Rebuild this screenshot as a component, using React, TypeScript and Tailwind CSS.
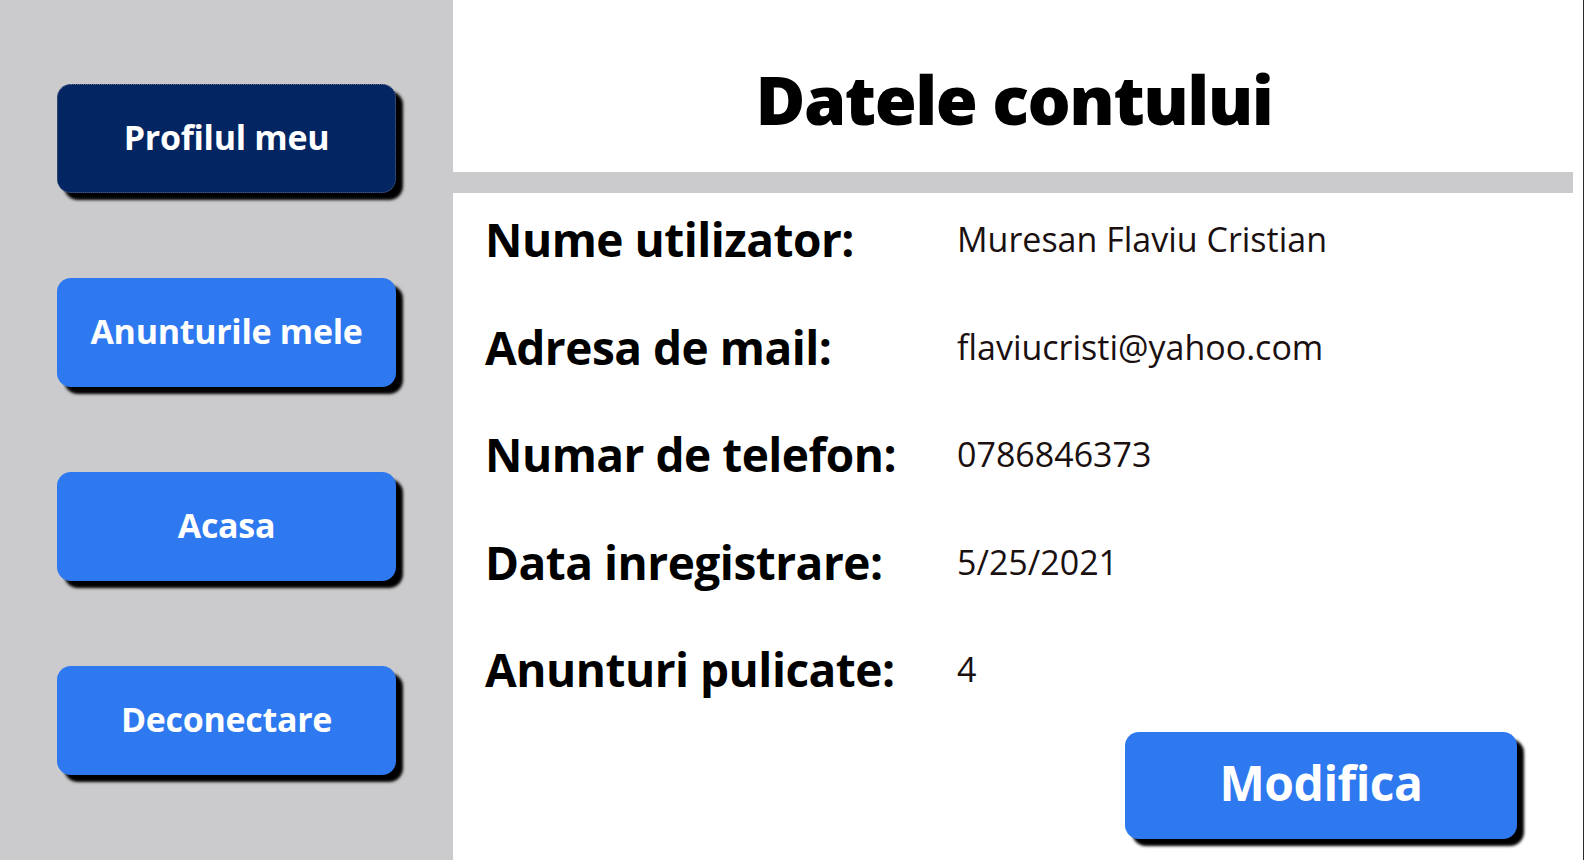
import React from "react";

const font = { fontFamily: '"Open Sans", "Noto Sans", sans-serif' };

function SideButton({ label, active }: { label: string; active?: boolean }) {
  return (
    <button
      className={
        "w-[339px] h-[109px] pb-[3px] rounded-[14px] shadow-[7px_7px_3px_#000] text-white font-bold text-[34px] tracking-[-0.3px] flex items-center justify-center " +
        (active ? "bg-[#032561] border border-dotted border-[#5a6a8a]" : "bg-[#2e79ef]")
      }
    >
      {label}
    </button>
  );
}

const rows: [string, string][] = [
  ["Nume utilizator:", "Muresan Flaviu Cristian"],
  ["Adresa de mail:", "flaviucristi@yahoo.com"],
  ["Numar de telefon:", "0786846373"],
  ["Data inregistrare:", "5/25/2021"],
  ["Anunturi pulicate:", "4"],
];

export default function App() {
  return (
    <div className="w-[1586px] h-[860px] flex bg-white overflow-hidden" style={font}>
      <aside className="w-[453px] h-full bg-[#cbcbcd] flex flex-col items-center pt-[84px] gap-[85px]">
        <SideButton label="Profilul meu" active />
        <SideButton label="Anunturile mele" />
        <SideButton label="Acasa" />
        <SideButton label="Deconectare" />
      </aside>
      <main className="w-[1131px] h-full flex flex-col border-r border-[#2b2b2b]">
        <div className="h-[172px] pt-[26px] flex items-center justify-center">
          <h1 className="text-[68px] font-extrabold text-black tracking-[-1.5px] pr-[8px]">Datele contului</h1>
        </div>
        <div className="h-[21px] bg-[#cbcbcd] mr-[10px]" />
        <div className="flex flex-col pl-[32px] mt-[-7px]">
          {rows.map(([k, v]) => (
            <div key={k} className="h-[107.5px] flex items-center">
              <div className="w-[472px] text-[46px] font-bold text-black tracking-[-0.5px]">{k}</div>
              <div className="text-[34px] text-[#1a1010]">{v}</div>
            </div>
          ))}
        </div>
        <div className="flex justify-end pr-[66px] mt-auto mb-[21px]">
          <button className="w-[392px] h-[107px] pb-[6px] rounded-[14px] bg-[#2e79ef] shadow-[7px_7px_3px_#000] text-white font-bold text-[48px] tracking-[-0.5px]">
            Modifica
          </button>
        </div>
      </main>
      <div className="w-[1px] h-full bg-white" />
    </div>
  );
}
